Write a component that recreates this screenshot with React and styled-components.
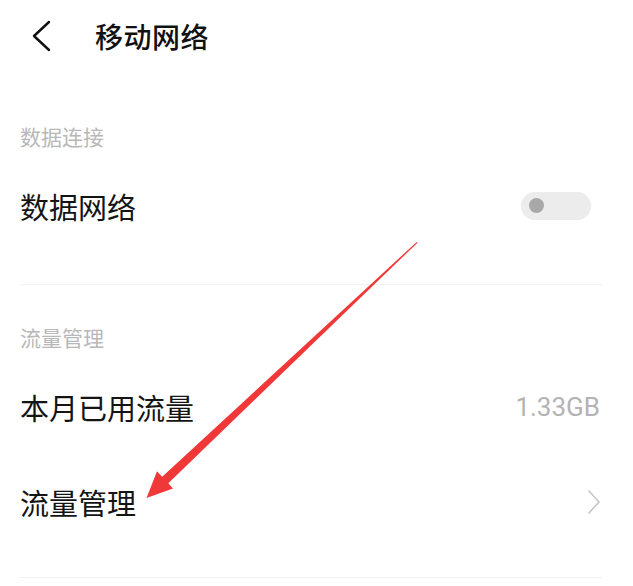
import React from 'react'
import styled, {createGlobalStyle} from 'styled-components'

const GlobalStyle = createGlobalStyle`
html, body {
  margin: 0;
  padding: 0;
  background: #fff;
}
body {
  font-family: "Noto Sans CJK SC", "Noto Sans", Roboto, sans-serif;
  color: #111;
}
`;

export default function App() {
  return (
    <Page>
      <GlobalStyle/>
      <NavBar>
        <BackButton>
          <svg width="22" height="32" viewBox="0 0 22 32">
            <polyline points="18,2 3,16 18,30" fill="none" stroke="#111" strokeWidth="2.4" strokeLinecap="round" strokeLinejoin="round"/>
          </svg>
        </BackButton>
        <Title>移动网络</Title>
      </NavBar>

      <Section $bottom={31}>
        <SectionTitle $top={38}>数据连接</SectionTitle>
        <Row>
          <RowLabel>数据网络</RowLabel>
          <Toggle>
            <Knob/>
          </Toggle>
        </Row>
      </Section>

      <Section $bottom={28}>
        <SectionTitle $top={30}>流量管理</SectionTitle>
        <Row>
          <RowLabel>本月已用流量</RowLabel>
          <RowValue>1.33GB</RowValue>
        </Row>
        <Row>
          <RowLabel>流量管理</RowLabel>
          <Chevron>
            <svg width="14" height="26" viewBox="0 0 14 26">
              <polyline points="2,2 12,13 2,24" fill="none" stroke="#c6c6c6" strokeWidth="1.6" strokeLinecap="round" strokeLinejoin="round"/>
            </svg>
          </Chevron>
        </Row>
      </Section>

      <Arrow viewBox="0 0 633 586" width="633" height="586">
        <polygon
          fill="#f03838"
          points="417.8,242.4 168.3,483.2 173,488.5 146.5,498 157,471.3 162.2,476.8 416.4,242.2"
        />
      </Arrow>
    </Page>
  )
}

const Page = styled.div`
position: relative;
width: 633px;
height: 586px;
overflow: hidden;
background: #fff;
`;

const NavBar = styled.div`
display: flex;
align-items: center;
height: 76px;
box-sizing: border-box;
padding: 0 0 4px 31px;
`;

const BackButton = styled.div`
display: flex;
align-items: center;
width: 64px;
`;

const Title = styled.div`
font-size: 28px;
font-weight: 500;
letter-spacing: 0.5px;
color: #111;
`;

const Section = styled.div`
margin: 0 31px 0 20px;
padding-bottom: ${p => p.$bottom}px;
border-bottom: 1px solid #f1f1f1;
`;

const SectionTitle = styled.div`
padding-top: ${p => p.$top}px;
height: 44px;
line-height: 44px;
font-size: 21px;
color: #b8b8b8;
`;

const Row = styled.div`
display: flex;
align-items: center;
justify-content: space-between;
height: 95px;
`;

const RowLabel = styled.div`
font-size: 29px;
color: #141414;
`;

const RowValue = styled.div`
font-family: Roboto, "Noto Sans", sans-serif;
font-size: 26px;
color: #b3b3b3;
margin-right: 2px;
`;

const Toggle = styled.div`
display: flex;
align-items: center;
width: 70px;
height: 28px;
border-radius: 14px;
background: #ececec;
margin-right: 11px;
padding-left: 8px;
box-sizing: border-box;
`;

const Knob = styled.div`
width: 15px;
height: 15px;
border-radius: 50%;
background: #a8a8a8;
`;

const Chevron = styled.div`
display: flex;
align-items: center;
margin-right: 1px;
`;

const Arrow = styled.svg`
position: absolute;
left: 0;
top: 0;
pointer-events: none;
`;
